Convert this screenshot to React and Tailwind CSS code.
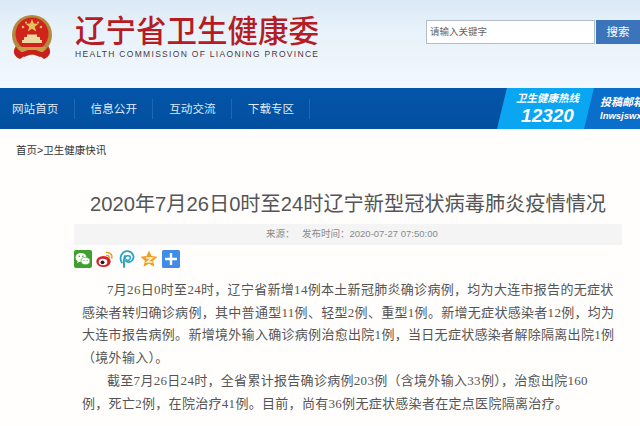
const CJK = '"Liberation Sans","Noto Sans CJK SC",sans-serif';

function Emblem() {
  return (
    <svg width="44" height="48" viewBox="0 0 44 48" className="shrink-0">
      <path d="M6 33 C2 38 4 44 10 46 L17 41 L27 41 L34 46 C40 44 42 38 38 33 Z" fill="#c9201b" />
      <circle cx="22" cy="22" r="20" fill="#b5893d" />
      <circle cx="22" cy="21" r="16.500" fill="#d0231c" />
      <path d="M22 6l1.800 4.600 4.700.2-3.700 3 1.300 4.600L22 15.800l-4.100 2.600 1.300-4.600-3.700-3 4.700-.2z" fill="#e6c25c" />
      <circle cx="13" cy="14" r="1.300" fill="#e6c25c" />
      <circle cx="31" cy="14" r="1.300" fill="#e6c25c" />
      <circle cx="16" cy="9.500" r="1.100" fill="#e6c25c" />
      <circle cx="28" cy="9.500" r="1.100" fill="#e6c25c" />
      <path d="M12 27h20v3H12zM14 24h16v3H14zM17 21.500h10v2.500H17z" fill="#ecd9a0" />
      <path d="M8 34h28l-3 5H11z" fill="#c8a049" />
      <path d="M10 40 L18 37 L26 37 L34 40 L30 44 L22 41 L14 44 Z" fill="#c9201b" />
    </svg>
  );
}

function WeChat() {
  return (
    <svg width="18" height="18" viewBox="0 0 18 18">
      <rect width="18" height="18" rx="2" fill="#3f9f2f" />
      <ellipse cx="7" cy="7.500" rx="5.500" ry="4.500" fill="#fff" />
      <path d="M4 10.500l-.8 2.500 3-1.500z" fill="#fff" />
      <ellipse cx="11.500" cy="11" rx="4.500" ry="3.700" fill="#fff" stroke="#3f9f2f" strokeWidth=".7" />
      <circle cx="5.300" cy="6.300" r=".8" fill="#3f9f2f" />
      <circle cx="8.800" cy="6.300" r=".8" fill="#3f9f2f" />
      <circle cx="10" cy="10.300" r=".6" fill="#3f9f2f" />
      <circle cx="13" cy="10.300" r=".6" fill="#3f9f2f" />
    </svg>
  );
}
function Weibo() {
  return (
    <svg width="18" height="18" viewBox="0 0 18 18">
      <ellipse cx="7.500" cy="11.500" rx="7.200" ry="5.500" fill="#d8222a" />
      <ellipse cx="7" cy="12" rx="4.300" ry="3.300" fill="#fff" />
      <circle cx="6.500" cy="12.300" r="1.900" fill="#222" />
      <path d="M10.500 2.500c3-.6 6 2 5.300 5.500M10.800 5.500c1.500-.3 2.700 1 2.400 2.500" fill="none" stroke="#ef9a1f" strokeWidth="1.500" strokeLinecap="round" />
    </svg>
  );
}
function Peng() {
  return (
    <svg width="18" height="18" viewBox="0 0 18 18">
      <path d="M6 17 C6 11 5.500 8 7 6" fill="none" stroke="#1f9fb5" strokeWidth="1.800" strokeLinecap="round" />
      <path d="M3.800 12.500 C.5 7 4.500 1 9.500 1.200 C14.500 1.500 17 6.500 14.500 10 C12.500 12.800 9 12.500 7.800 11" fill="none" stroke="#2aa3c9" strokeWidth="1.800" strokeLinecap="round" />
      <path d="M7 9 C6.500 5.500 11.800 4.500 12.300 7.500 C12.700 10 9.500 10.800 8.500 9.800" fill="none" stroke="#2aa3c9" strokeWidth="1.600" strokeLinecap="round" />
    </svg>
  );
}
function QZone() {
  return (
    <svg width="18" height="18" viewBox="0 0 18 18">
      <path d="M9 .5l2.500 5.500 6 .7-4.400 4 1.300 6L9 13.700 3.600 16.700l1.300-6L.5 6.700l6-.7z" fill="#eda021" />
      <path d="M6 8h6l-5 4h5.500" fill="none" stroke="#fff4d8" strokeWidth="1.400" />
    </svg>
  );
}
function Plus() {
  return (
    <svg width="18" height="18" viewBox="0 0 18 18">
      <rect width="18" height="18" rx="1.500" fill="#3f8de4" />
      <path d="M7.800 3h2.400v4.800H15v2.400h-4.800V15H7.800v-4.800H3V7.800h4.800z" fill="#fff" />
    </svg>
  );
}

const navItems = ['网站首页', '信息公开', '互动交流', '下载专区'];

export default function App() {
  return (
    <div className="w-[640px] h-[426px] overflow-hidden bg-[#fffefd] text-[#333]" style={{ fontFamily: CJK }}>
      <header className="h-[88px] flex items-start bg-[linear-gradient(180deg,#dbeaf6_0%,#e8f2fa_35%,#f2f8fd_100%)]">
        <div className="flex items-start pl-[10px] pt-[13px]">
          <Emblem />
          <div className="ml-[21px] w-[250px] pt-[1px]">
            <div className="text-[30.500px] leading-[34px] font-medium text-[#b51c24] whitespace-nowrap">辽宁省卫生健康委</div>
            <div className="text-[8.500px] leading-[12px] tracking-[1.300px] text-[#4f3540] whitespace-nowrap">HEALTH COMMISSION OF LIAONING PROVINCE</div>
          </div>
        </div>
        <div className="ml-auto mt-[20px] flex h-[24px]">
          <div className="w-[169px] bg-white border border-[#b4bcc8] pl-[3px] text-[9.500px] leading-[22px] text-[#666]">请输入关键字</div>
          <div className="w-[44px] ml-[1px] bg-[#3b74ba] text-white text-[11.500px] leading-[24px] text-center">搜索</div>
        </div>
      </header>

      <nav className="h-[41px] flex items-center bg-[linear-gradient(180deg,#0455a9_0%,#024f9f_100%)]">
        <div className="flex items-center pl-[12px]">
          {navItems.map((n) => (
            <div key={n} className="w-[62.600px] mr-[16px] h-[20px] flex items-center border-r border-[#1c68b4] text-[11.600px] text-[#dfeaf6] whitespace-nowrap">{n}</div>
          ))}
        </div>
        <div className="ml-auto h-full w-[143px] flex bg-[#0a6ecb] [clip-path:polygon(10px_0,100%_0,100%_100%,0_100%)]">
          <div className="w-[97px] shrink-0 h-full flex flex-col items-center bg-[#0aa6f2] [clip-path:polygon(0_0,100%_0,calc(100%-10px)_100%,0_100%)] pl-[4px]">
            <div className="text-[10.500px] leading-[12px] mt-[4px] font-bold italic text-white whitespace-nowrap">卫生健康热线</div>
            <div className="text-[19px] leading-[20px] mt-[2px] font-bold italic text-white">12320</div>
          </div>
          <div className="flex-1 pl-[6px] pt-[8px] text-white italic font-bold whitespace-nowrap overflow-hidden">
            <div className="text-[11px] leading-[13px]">投稿邮箱</div>
            <div className="text-[9.500px] leading-[11px] mt-[1px]">lnwsjswxx</div>
          </div>
        </div>
      </nav>

      <div className="pl-[16px] pt-[15px] text-[10.500px] leading-[12px] text-[#333]">首页&gt;卫生健康快讯</div>

      <main className="ml-[74px] w-[548px]">
        <h1 className="mt-[35px] text-[20.200px] leading-[26px] text-center text-[#555] font-normal whitespace-nowrap">2020年7月26日0时至24时辽宁新型冠状病毒肺炎疫情情况</h1>
        <div className="mt-[7px] h-[21px] bg-[#f4f4f4] flex items-center pl-[192px] text-[9.500px] text-[#8a8a8a] whitespace-nowrap">
          <span className="w-[36px]">来源：</span>
          <span>发布时间：2020-07-27 07:50:00</span>
        </div>
        <div className="mt-[5px] flex items-center gap-[4px] h-[18px]">
          <WeChat /><Weibo /><Peng /><QZone /><Plus />
        </div>
        <article className="mt-[11px] pl-[8px] pr-[6px] text-[13px] tracking-[0.300px] leading-[22.700px] text-[#555]" style={{ fontFamily: '"Liberation Serif","Noto Sans CJK SC",serif' }}>
          <p className="indent-[25px]">7月26日0时至24时，辽宁省新增14例本土新冠肺炎确诊病例，均为大连市报告的无症状感染者转归确诊病例，其中普通型11例、轻型2例、重型1例。新增无症状感染者12例，均为大连市报告病例。新增境外输入确诊病例治愈出院1例，当日无症状感染者解除隔离出院1例（境外输入）。</p>
          <p className="indent-[25px]">截至7月26日24时，全省累计报告确诊病例203例（含境外输入33例），治愈出院160<br />例，死亡2例，在院治疗41例。目前，尚有36例无症状感染者在定点医院隔离治疗。</p>
        </article>
      </main>
    </div>
  );
}
